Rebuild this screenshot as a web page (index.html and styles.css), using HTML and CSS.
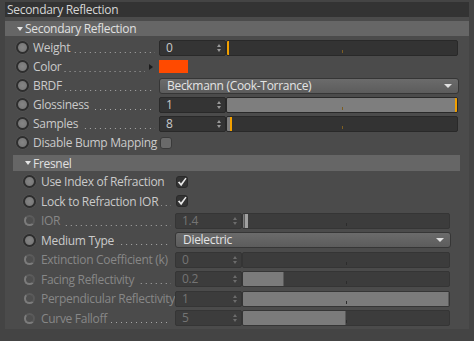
FILE: index.html
```html
<!DOCTYPE html>
<html lang="en">
<head>
    <meta charset="UTF-8">
    <title>Secondary Reflection</title>
    <link rel="stylesheet" href="styles.css">
</head>
<body>
    <div class="panel">
        <div class="title">Secondary Reflection</div>
        <div class="group-head"><span class="tri"></span>Secondary Reflection</div>

        <div class="rows">
            <div class="row">
                <div class="lead"><span class="radio"></span><span class="label">Weight</span><span class="dots"></span></div>
                <div class="field">
                    <div class="num">0<span class="spin"></span></div>
                    <div class="slider"><span class="tick"></span><span class="mark" style="left:0"></span></div>
                </div>
            </div>
            <div class="row">
                <div class="lead"><span class="radio"></span><span class="label">Color</span><span class="dots"></span><span class="arrow"></span></div>
                <div class="field"><span class="swatch"></span></div>
            </div>
            <div class="row">
                <div class="lead"><span class="radio"></span><span class="label">BRDF</span><span class="dots"></span></div>
                <div class="field">
                    <div class="select">Beckmann (Cook-Torrance)<span class="caret"></span></div>
                </div>
            </div>
            <div class="row">
                <div class="lead"><span class="radio"></span><span class="label">Glossiness</span><span class="dots"></span></div>
                <div class="field">
                    <div class="num">1<span class="spin"></span></div>
                    <div class="slider"><span class="fill" style="width:100%"></span><span class="tick"></span><span class="mark" style="left:calc(100% - 2px)"></span></div>
                </div>
            </div>
            <div class="row">
                <div class="lead"><span class="radio"></span><span class="label">Samples</span><span class="dots"></span></div>
                <div class="field">
                    <div class="num">8<span class="spin"></span></div>
                    <div class="slider"><span class="fill" style="width:3px"></span><span class="tick"></span><span class="mark" style="left:3px"></span></div>
                </div>
            </div>
            <div class="row">
                <div class="lead"><span class="radio"></span><span class="label">Disable Bump Mapping</span></div>
                <div class="field"><span class="check"></span></div>
            </div>
        </div>

        <div class="sub">
            <div class="group-head"><span class="tri"></span>Fresnel</div>
            <div class="rows">
                <div class="row">
                    <div class="lead"><span class="radio"></span><span class="label">Use Index of Refraction</span></div>
                    <div class="field"><span class="check on"><svg width="10" height="10" viewBox="0 0 10 10"><path d="M0.8 5.2 L2.6 4.4 L3.9 6.6 L8.4 0.8 L9.6 1.6 L4.2 9.2 Z"/></svg></span></div>
                </div>
                <div class="row">
                    <div class="lead"><span class="radio"></span><span class="label">Lock to Refraction IOR</span><span class="dots"></span></div>
                    <div class="field"><span class="check on"><svg width="10" height="10" viewBox="0 0 10 10"><path d="M0.8 5.2 L2.6 4.4 L3.9 6.6 L8.4 0.8 L9.6 1.6 L4.2 9.2 Z"/></svg></span></div>
                </div>
                <div class="row off">
                    <div class="lead"><span class="radio"></span><span class="label">IOR</span><span class="dots"></span></div>
                    <div class="field">
                        <div class="num">1.4<span class="spin"></span></div>
                        <div class="slider"><span class="fill" style="width:2px"></span><span class="tick"></span><span class="mark" style="left:2px"></span></div>
                    </div>
                </div>
                <div class="row">
                    <div class="lead"><span class="radio"></span><span class="label">Medium Type</span><span class="dots"></span></div>
                    <div class="field">
                        <div class="select">Dielectric<span class="caret"></span></div>
                    </div>
                </div>
                <div class="row off">
                    <div class="lead"><span class="radio"></span><span class="label">Extinction Coefficient (k)</span></div>
                    <div class="field">
                        <div class="num">0<span class="spin"></span></div>
                        <div class="slider"><span class="tick"></span></div>
                    </div>
                </div>
                <div class="row off">
                    <div class="lead"><span class="radio"></span><span class="label">Facing Reflectivity</span><span class="dots"></span></div>
                    <div class="field">
                        <div class="num">0.2<span class="spin"></span></div>
                        <div class="slider"><span class="tick"></span><span class="fill" style="width:20%"></span></div>
                    </div>
                </div>
                <div class="row off">
                    <div class="lead"><span class="radio"></span><span class="label">Perpendicular Reflectivity</span></div>
                    <div class="field">
                        <div class="num">1<span class="spin"></span></div>
                        <div class="slider"><span class="fill" style="width:100%"></span><span class="tick"></span></div>
                    </div>
                </div>
                <div class="row off">
                    <div class="lead"><span class="radio"></span><span class="label">Curve Falloff</span><span class="dots"></span></div>
                    <div class="field">
                        <div class="num">5<span class="spin"></span></div>
                        <div class="slider"><span class="tick"></span><span class="fill" style="width:50%"></span></div>
                    </div>
                </div>
            </div>
        </div>
    </div>
</body>
</html>
```

FILE: styles.css
```css
* {
    margin: 0;
    padding: 0;
    box-sizing: border-box;
}

body {
    background-color: #444;
    font-family: 'Open Sans', 'Noto Sans', sans-serif;
    font-size: 12px;
    letter-spacing: -0.3px;
    color: #cacaca;
    width: 474px;
    height: 341px;
    overflow: hidden;
}

.panel {
    margin: 2px 5px 0;
    height: 327px;
    background-color: #4b4b4b;
}

.title {
    height: 15px;
    line-height: 15px;
    background-color: #333;
    color: #d6d6d6;
    padding-left: 2px;
}

.group-head {
    display: flex;
    align-items: center;
    margin-top: 4px;
    height: 15px;
    line-height: 15px;
    background-color: #666;
    color: #e0e0e0;
    padding-left: 12px;
}

.tri {
    width: 0;
    height: 0;
    border-left: 3.5px solid transparent;
    border-right: 3.5px solid transparent;
    border-top: 4px solid #e6e6e6;
    margin-right: 2px;
}

.rows {
    padding: 2px 11px 0;
}

.row {
    display: flex;
    align-items: center;
    height: 19px;
}

.lead {
    display: flex;
    align-items: center;
    width: 143px;
    flex-shrink: 0;
    height: 100%;
}

.radio {
    width: 13px;
    height: 13px;
    border-radius: 50%;
    border: 2px solid #2e2e2e;
    background: radial-gradient(circle, #858585 0, #747474 100%);
    box-shadow: 0 0 0 0.5px #5a5a5a;
    margin-right: 4px;
    flex-shrink: 0;
}

.label {
    white-space: nowrap;
}

.dots {
    flex: 1;
    height: 1px;
    margin: 9px 4px 0 3px;
    background-image: linear-gradient(90deg, #a8a8a8 1px, transparent 1px);
    background-size: 5px 1px;
    background-position: right top;
}

.arrow {
    width: 0;
    height: 0;
    border-left: 4px solid #1c1c1c;
    border-top: 3.5px solid transparent;
    border-bottom: 3.5px solid transparent;
    margin-right: 6px;
}

.field {
    flex: 1;
    display: flex;
    align-items: center;
    height: 16px;
}

.num {
    position: relative;
    width: 67px;
    height: 16px;
    flex-shrink: 0;
    background-color: #343434;
    border: 1px solid #292929;
    border-radius: 2px;
    padding-left: 6px;
    line-height: 14px;
}

.spin {
    position: absolute;
    right: 3px;
    top: 3px;
    width: 5px;
    height: 8px;
}

.spin::before,
.spin::after {
    content: '';
    position: absolute;
    left: 0;
    border-left: 2.5px solid transparent;
    border-right: 2.5px solid transparent;
}

.spin::before {
    top: 0;
    border-bottom: 3px solid #9a9a9a;
}

.spin::after {
    bottom: 0;
    border-top: 3px solid #9a9a9a;
}

.slider {
    position: relative;
    flex: 1;
    height: 16px;
    background-color: #333;
    border: 1px solid #292929;
    border-radius: 2px;
    overflow: hidden;
}

.fill {
    position: absolute;
    left: 0;
    top: 0;
    bottom: 0;
    background-color: #7e7e7e;
}

.tick {
    position: absolute;
    left: 50%;
    bottom: 2px;
    width: 1px;
    height: 3px;
    background-color: #7d5e22;
}

.mark {
    position: absolute;
    top: 0;
    bottom: 0;
    width: 2px;
    background-color: #f2a000;
}

.swatch {
    width: 29px;
    height: 13px;
    background-color: #ff4a00;
}

.select {
    flex: 1;
    display: flex;
    justify-content: space-between;
    align-items: center;
    height: 16px;
    margin-right: -1px;
    padding-left: 7px;
    border: 1px solid #363636;
    border-radius: 3px;
    background: linear-gradient(#6b6b6b, #5c5c5c);
    color: #e4e4e4;
    line-height: 14px;
}

.caret {
    width: 0;
    height: 0;
    border-left: 4px solid transparent;
    border-right: 4px solid transparent;
    border-top: 4px solid #e0e0e0;
    margin-right: 6px;
}

.check {
    display: flex;
    align-items: center;
    justify-content: center;
    width: 12px;
    height: 12px;
    margin-left: 1px;
    border-radius: 3px;
    border: 1px solid #3a3a3a;
    background-color: #6a6a6a;
}

.check.on {
    background-color: #333;
    border-color: #2a2a2a;
}

.check svg path {
    fill: #e8e8e8;
}

/* Fresnel sub group */
.sub {
    margin: 3px 9px 0 8px;
}

.sub .group-head {
    margin-top: 0;
    height: 16px;
}

.sub .rows {
    padding: 1px 10px 0;
}

.sub .row {
    height: 19.5px;
}

.sub .lead {
    width: 152px;
}

.sub .radio {
    margin-right: 5px;
}

/* disabled rows */
.off .label {
    color: #878787;
}

.off .radio {
    width: 11px;
    height: 11px;
    border-width: 2px;
    border-color: #5c5c5c #5a5a5a #7c7c7c #7c7c7c;
    background: #4f4f4f;
    box-shadow: none;
    margin-left: 1px;
    margin-right: 6px;
}

.off .num {
    background-color: #3c3c3c;
    border-color: #353535;
    color: #747474;
}

.off .spin::before {
    border-bottom-color: #6c6c6c;
}

.off .spin::after {
    border-top-color: #6c6c6c;
}

.off .slider {
    background-color: #3c3c3c;
    border-color: #353535;
}

.off .fill {
    background-color: #7b7b7b;
    border-right: 1px solid #5a5a5a;
}

.off .tick {
    background-color: #2c2c2c;
}

.off .mark {
    width: 3px;
    background-color: #a0a0a0;
}
```
